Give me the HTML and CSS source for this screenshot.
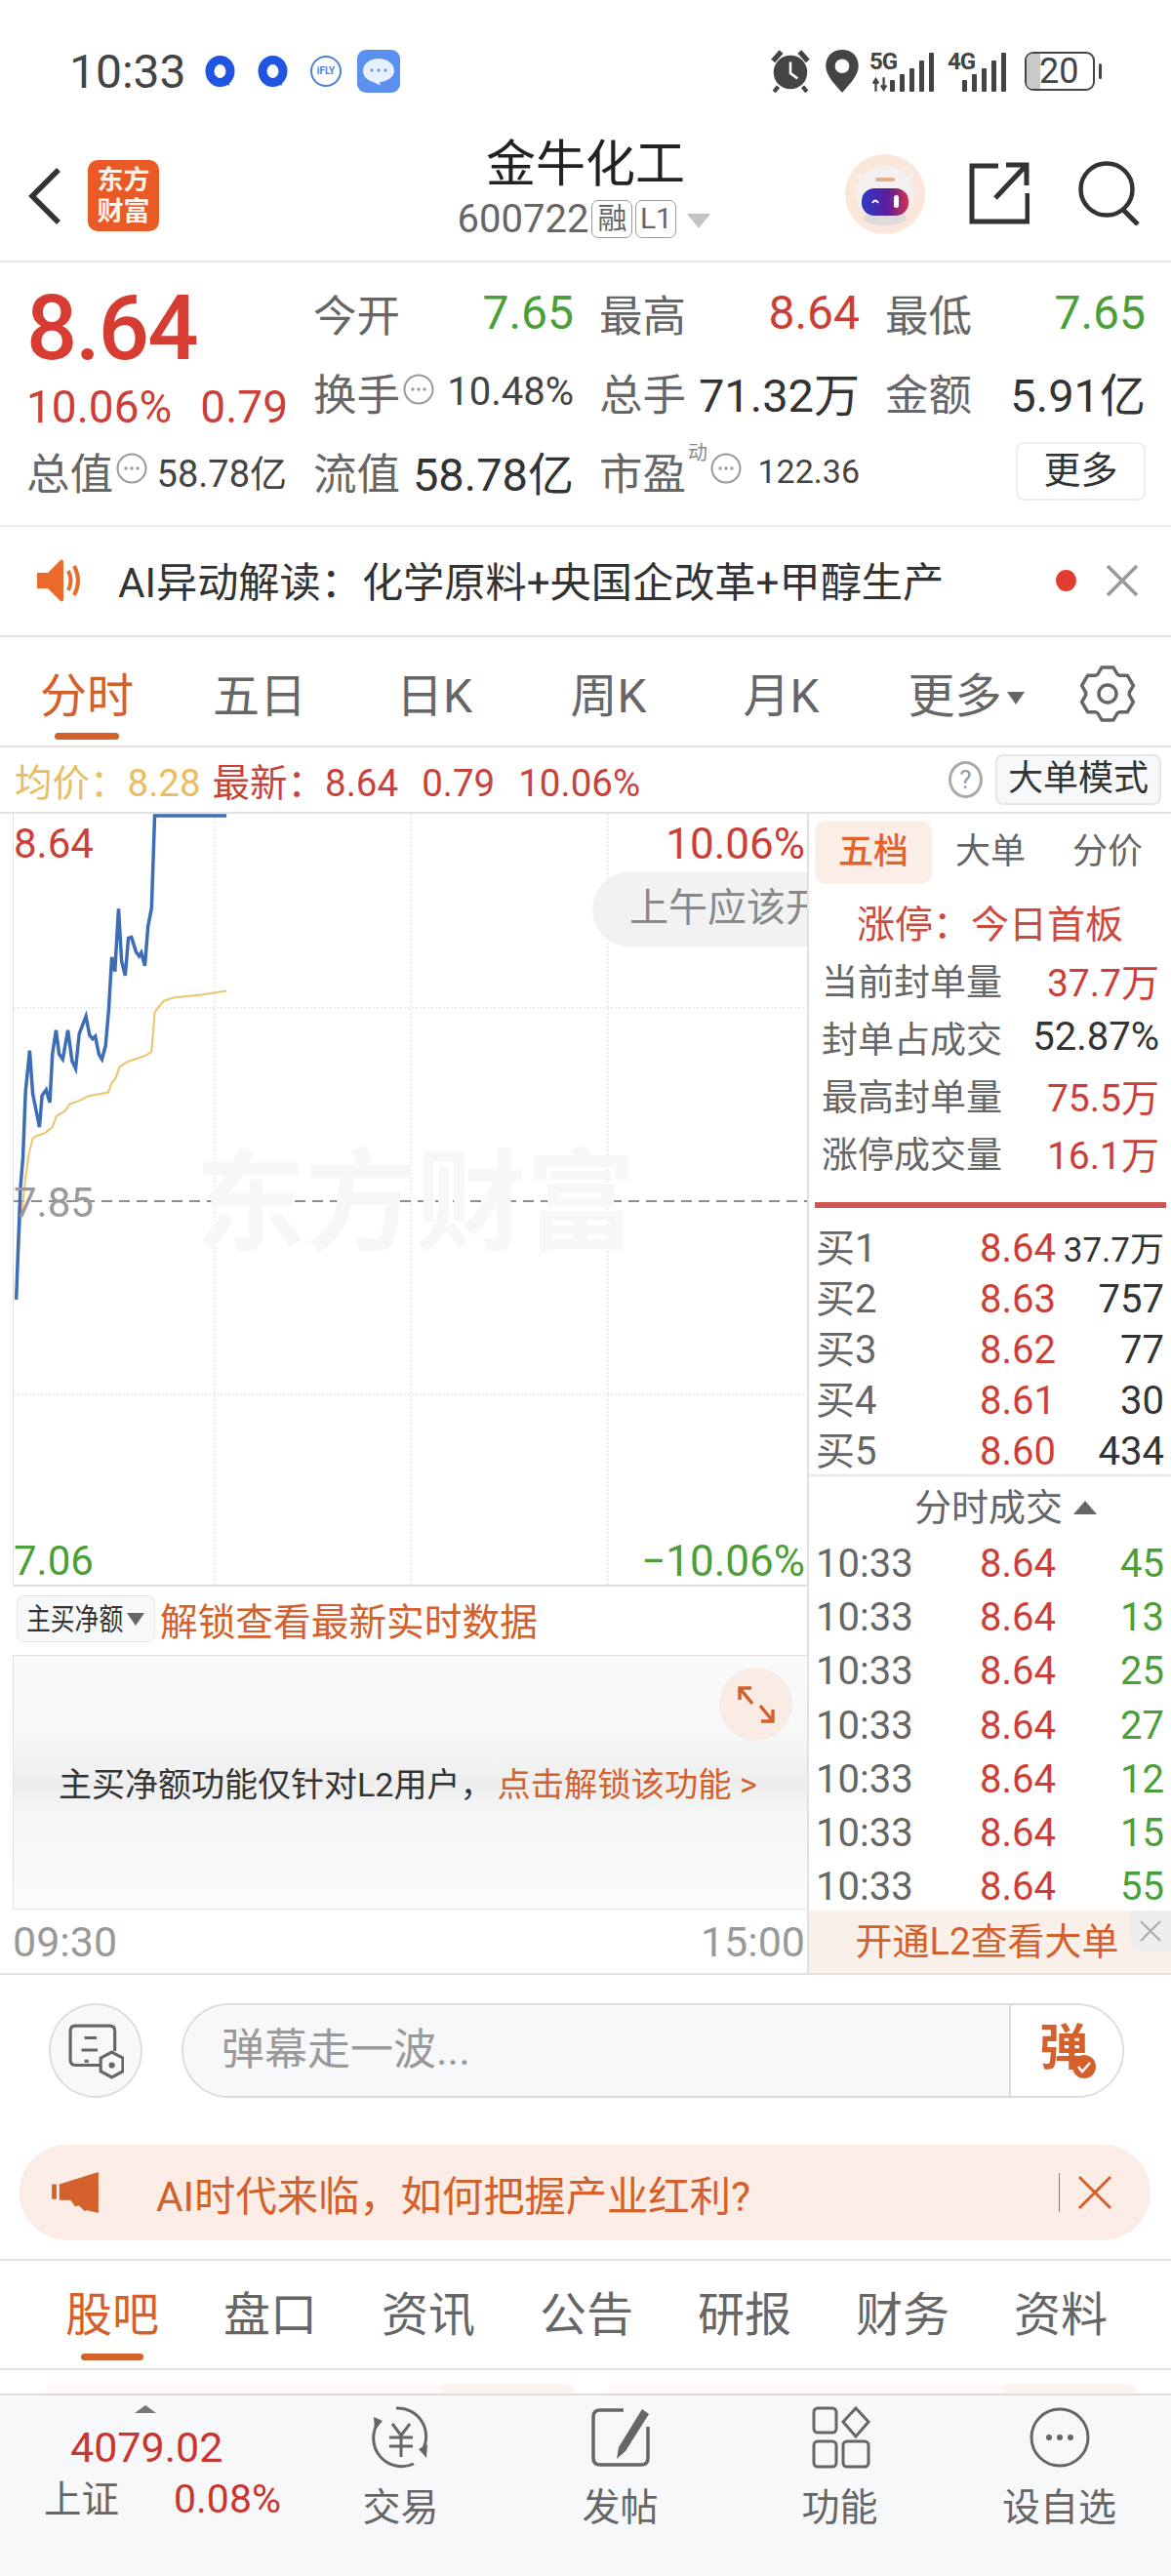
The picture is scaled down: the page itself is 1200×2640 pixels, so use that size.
FILE: index.html
```html
<!DOCTYPE html>
<html lang="zh-CN">
<head>
    <meta charset="UTF-8">
    <title>金牛化工</title>
    <link rel="stylesheet" href="styles.css">
</head>
<body>
<svg class="defs">
    <symbol id="dots" viewBox="0 0 32 32">
        <circle cx="16" cy="16" r="14.5" fill="none" stroke="#999" stroke-width="2"/>
        <circle cx="10" cy="16" r="1.7" fill="#999"/><circle cx="16" cy="16" r="1.7" fill="#999"/><circle cx="22" cy="16" r="1.7" fill="#999"/>
    </symbol>
</svg>

<!-- status bar -->
<div class="statusbar">
    <span class="clock">10:33</span>
    <svg class="ring" viewBox="0 0 30 32"><ellipse cx="15" cy="16" rx="10.500" ry="11.500" fill="none" stroke="#1f55e0" stroke-width="9"/><path d="M15 24l9 7 2-12z" fill="#1f55e0"/></svg>
    <svg class="ring ring-b" viewBox="0 0 30 32"><ellipse cx="15" cy="16" rx="10.500" ry="11.500" fill="none" stroke="#1f55e0" stroke-width="9"/><path d="M15 24l9 7 2-12z" fill="#1f55e0"/></svg>
    <span class="ifly">iFLY</span>
    <svg class="chat-app" viewBox="0 0 44 44"><rect width="44" height="44" rx="9" fill="#5b8ff0"/><path d="M22 9c-9 0-16 5.500-16 12.500 0 5 3.500 9 9 11l9 4-1-3.500c8-.5 15-5 15-11.500C38 14.500 31 9 22 9z" fill="#e6f0ff"/><circle cx="15" cy="21" r="1.500" fill="#5b8ff0"/><circle cx="22" cy="21" r="1.500" fill="#5b8ff0"/><circle cx="29" cy="21" r="1.500" fill="#5b8ff0"/></svg>
    <div class="status-right">
        <svg class="st-alarm" viewBox="0 0 40 42"><circle cx="20" cy="22" r="16.500" fill="#444"/><path d="M20 12v11l7 5" stroke="#fff" stroke-width="2.500" fill="none"/><path d="M3 11L11 2M37 11L29 2" stroke="#444" stroke-width="5"/><path d="M8 36l-4 5M32 36l4 5" stroke="#444" stroke-width="4"/></svg>
        <svg class="st-pin" viewBox="0 0 34 42"><path d="M17 0C7 0 1 7 1 16c0 10 11 20 16 26 5-6 16-16 16-26C33 7 27 0 17 0z" fill="#444"/><circle cx="17" cy="16" r="7" fill="#fff"/></svg>
        <div class="signal signal-5g">
            <span class="sig-label">5G</span>
            <svg class="sig-arrows" viewBox="0 0 20 16"><path d="M5 16V5M2 7l3-5 3 5M14 0v11M11 9l3 5 3-5" stroke="#444" stroke-width="2.500" fill="none"/></svg>
            <svg class="sig-bars" viewBox="0 0 46 40"><rect x="0" y="28" width="5" height="12" rx="1"/><rect x="10" y="22" width="5" height="18" rx="1"/><rect x="20" y="16" width="5" height="24" rx="1"/><rect x="30" y="8" width="5" height="32" rx="1"/><rect x="40" y="0" width="5" height="40" rx="1"/></svg>
        </div>
        <div class="signal signal-4g">
            <span class="sig-label">4G</span>
            <svg class="sig-bars" viewBox="0 0 46 40"><rect x="0" y="28" width="5" height="12" rx="1"/><rect x="10" y="22" width="5" height="18" rx="1"/><rect x="20" y="16" width="5" height="24" rx="1"/><rect x="30" y="8" width="5" height="32" rx="1"/><rect x="40" y="0" width="5" height="40" rx="1"/></svg>
        </div>
        <div class="battery"><span class="battery-level"></span><span class="battery-num">20</span></div>
        <span class="battery-nub"></span>
    </div>
</div>

<!-- header -->
<div class="header">
    <svg class="back" viewBox="0 0 34 60"><path d="M31 3L4 30l27 27" fill="none" stroke="#333" stroke-width="5.500"/></svg>
    <div class="logo"><span>东方</span><span>财富</span></div>
    <div class="title-box">
        <div class="title">金牛化工</div>
        <div class="code-row">
            <span class="code">600722</span><span class="tag">融</span><span class="tag">L1</span><span class="tri-down"></span>
        </div>
    </div>
    <svg class="robot" viewBox="0 0 82 82">
        <defs><linearGradient id="visor" x1="0" x2="1"><stop offset="0" stop-color="#2d3bc8"/><stop offset=".55" stop-color="#5a1f9c"/><stop offset="1" stop-color="#d2304e"/></linearGradient></defs>
        <circle cx="41" cy="41" r="41" fill="#fbe6da"/>
        <path d="M13 20l7 9M69 20l-7 9" stroke="#f2f0ee" stroke-width="5"/>
        <ellipse cx="41" cy="40" rx="30" ry="28" fill="#f3f1ef"/>
        <ellipse cx="41" cy="66" rx="22" ry="7" fill="#dedcda"/>
        <rect x="31" y="24" width="20" height="4" rx="2" fill="#e0b18c"/>
        <rect x="17" y="35" width="48" height="28" rx="13" fill="url(#visor)"/>
        <path d="M28 50q3-5 6 0" stroke="#fff" stroke-width="2" fill="none"/>
        <rect x="50" y="42" width="5" height="13" rx="2.500" fill="#fff"/>
    </svg>
    <svg class="share" viewBox="0 0 62 64"><path d="M30 4H3v57h57V32" fill="none" stroke="#333" stroke-width="5"/><path d="M27 37L58 4M38 3h21v21" fill="none" stroke="#333" stroke-width="5"/></svg>
    <svg class="search" viewBox="0 0 64 66"><circle cx="29" cy="29" r="26.500" fill="none" stroke="#333" stroke-width="4.500"/><path d="M46 50l15 15" stroke="#333" stroke-width="5"/></svg>
</div>

<!-- quote -->
<div class="quote">
    <div class="price-box">
        <div class="price">8.64</div>
        <div class="change"><span>10.06%</span><span>0.79</span></div>
    </div>
    <div class="cell"><span class="lbl">今开</span><span class="val green">7.65</span></div>
    <div class="cell"><span class="lbl">最高</span><span class="val red">8.64</span></div>
    <div class="cell"><span class="lbl">最低</span><span class="val green">7.65</span></div>
    <div class="cell"><span class="lbl">换手<svg class="dots"><use href="#dots"/></svg></span><span class="val small">10.48%</span></div>
    <div class="cell"><span class="lbl">总手</span><span class="val dark">71.32万</span></div>
    <div class="cell"><span class="lbl">金额</span><span class="val dark">5.91亿</span></div>
    <div class="cell first"><span class="lbl">总值<svg class="dots"><use href="#dots"/></svg></span><span class="val tiny">58.78亿</span></div>
    <div class="cell"><span class="lbl">流值</span><span class="val dark">58.78亿</span></div>
    <div class="cell"><span class="lbl">市盈<sup class="sup">动</sup><svg class="dots"><use href="#dots"/></svg></span><span class="val smaller">122.36</span></div>
    <div class="cell end"><span class="more-btn">更多</span></div>
</div>

<!-- notice -->
<div class="notice">
    <svg class="speaker" viewBox="0 0 48 46"><path d="M1 15h11L25 2c2-1 3 0 3 2v38c0 2-1 3-3 2L12 31H1z" fill="#ea6a2c"/><path d="M33 13q5 10 0 20M39 8q8 15 0 30" fill="none" stroke="#ea6a2c" stroke-width="4"/></svg>
    <span class="notice-text">AI异动解读：化学原料+央国企改革+甲醇生产</span>
    <span class="red-dot"></span>
    <svg class="notice-x" viewBox="0 0 34 34"><path d="M2 2l30 30M32 2L2 32" stroke="#999" stroke-width="3.500"/></svg>
</div>

<!-- period tabs -->
<div class="tabs">
    <span class="tab on">分时</span>
    <span class="tab">五日</span>
    <span class="tab">日K</span>
    <span class="tab">周K</span>
    <span class="tab">月K</span>
    <span class="tab">更多<i class="tri-small"></i></span>
    <svg class="gear" viewBox="-2 -2 58 60"><path d="M17 8l4-7h12l4 7 2.300 1.300 8.100 0 6 10.400-4.100 7v2.600l4.100 7-6 10.400h-8.100L37 48l-4 7H21l-4-7-2.300-1.300H6.600l-6-10.400 4.100-7v-2.600l-4.100-7 6-10.400h8.100z" fill="none" stroke="#666" stroke-width="3.500" stroke-linejoin="round"/><circle cx="27" cy="28" r="9" fill="none" stroke="#666" stroke-width="3.500"/></svg>
</div>

<!-- avg / last bar -->
<div class="infobar">
    <span class="avg">均价：8.28</span>
    <span class="last"><span>最新：8.64</span><span>0.79</span><span>10.06%</span></span>
    <span class="help">?</span>
    <span class="mode-btn">大单模式</span>
</div>

<div class="main">
    <div class="left">
        <div class="chart">
            <svg class="chart-svg" viewBox="0 0 813 792">
                <path class="grid-line" d="M206 0V792M407 0V792M609 0V792M0 199H813M0 595H813"/>
                <path class="mid-line" d="M0 397H813"/>
                <g transform="scale(.5294 .523) translate(-25 -26)">
                    <polyline class="avg-line" points="30,960 38,830 48,740 55,690 62,662 70,657 85,652 100,640 108,618 125,608 133,595 155,587 170,579 208,572 215,553 222,545 230,522 245,512 280,500 292,492 298,415 315,393 335,386 385,381 437,373"/>
                    <polyline class="price-line" points="30,978 38,760 43,700 48,570 56,490 62,575 75,640 80,578 88,567 95,592 100,497 107,450 113,497 120,507 130,450 138,510 145,525 152,457 165,423 172,460 178,467 183,462 190,497 196,507 203,480 209,410 215,307 221,335 228,212 234,315 241,343 247,270 253,268 262,297 268,305 272,298 279,324 285,247 292,210 298,30 437,30"/>
                </g>
            </svg>
            <div class="watermark">东方财富</div>
            <div class="toast">上午应该开</div>
            <div class="chart-labels">
                <div class="label-row"><span class="red">8.64</span><span class="red wide">10.06%</span></div>
                <div class="label-row"><span class="gray">7.85</span></div>
                <div class="label-row"><span class="green">7.06</span><span class="green wide">−10.06%</span></div>
            </div>
        </div>
        <div class="strip">
            <span class="select"><span class="select-text">主买净额</span><i class="tri-small"></i></span>
            <span class="unlock">解锁查看最新实时数据</span>
        </div>
        <div class="locked">
            <span class="locked-text">主买净额功能仅针对L2用户，<em>点击解锁该功能 &gt;</em></span>
            <span class="expand"><svg viewBox="0 0 38 38"><path d="M2 14V2h12M2 2l13 16M36 24v12H24M36 36L23 20" fill="none" stroke="#d4602b" stroke-width="3.500"/></svg></span>
        </div>
        <div class="axis"><span>09:30</span><span>15:00</span></div>
    </div>

    <div class="right">
        <div class="side-tabs">
            <span class="side-tab on">五档</span><span class="side-tab">大单</span><span class="side-tab">分价</span>
        </div>
        <div class="limit-title">涨停：今日首板</div>
        <div class="limit-row"><span>当前封单量</span><b class="red">37.7万</b></div>
        <div class="limit-row"><span>封单占成交</span><b class="wider">52.87%</b></div>
        <div class="limit-row"><span>最高封单量</span><b class="red">75.5万</b></div>
        <div class="limit-row"><span>涨停成交量</span><b class="red">16.1万</b></div>
        <div class="limit-bar"></div>
        <div class="book">
            <div class="book-row"><span>买1</span><b class="red">8.64</b><i class="tight">37.7万</i></div>
            <div class="book-row"><span>买2</span><b class="red">8.63</b><i>757</i></div>
            <div class="book-row"><span>买3</span><b class="red">8.62</b><i>77</i></div>
            <div class="book-row"><span>买4</span><b class="red">8.61</b><i>30</i></div>
            <div class="book-row"><span>买5</span><b class="red">8.60</b><i>434</i></div>
        </div>
        <div class="trades-head">分时成交<i class="tri-up"></i></div>
        <div class="trade-row"><span>10:33</span><b class="red">8.64</b><i class="green">45</i></div>
        <div class="trade-row"><span>10:33</span><b class="red">8.64</b><i class="green">13</i></div>
        <div class="trade-row"><span>10:33</span><b class="red">8.64</b><i class="green">25</i></div>
        <div class="trade-row"><span>10:33</span><b class="red">8.64</b><i class="green">27</i></div>
        <div class="trade-row"><span>10:33</span><b class="red">8.64</b><i class="green">12</i></div>
        <div class="trade-row"><span>10:33</span><b class="red">8.64</b><i class="green">15</i></div>
        <div class="trade-row"><span>10:33</span><b class="red">8.64</b><i class="green">55</i></div>
        <div class="l2-banner">
            开通L2查看大单
            <span class="l2-close"><svg viewBox="0 0 24 24"><path d="M2 2l20 20M22 2L2 22" stroke="#aaa" stroke-width="2"/></svg></span>
        </div>
    </div>
</div>

<!-- danmu input -->
<div class="danmu">
    <span class="danmu-btn">
        <svg viewBox="0 0 56 56"><path d="M36 42H8q-5 0-5-5V8q0-5 5-5h34q5 0 5 5v20" fill="none" stroke="#666" stroke-width="3"/><path d="M17 15h12M14 27h16M17 38h4" stroke="#666" stroke-width="3"/><path d="M44 29l11 6v13l-11 6-11-6V35z" fill="#f7f8fa" stroke="#666" stroke-width="3"/><circle cx="44" cy="42" r="3" fill="#666"/></svg>
    </span>
    <div class="danmu-input">
        <span class="placeholder">弹幕走一波...</span>
        <span class="danmu-send">弹<svg viewBox="0 0 24 24"><circle cx="12" cy="12" r="12" fill="#d4602b"/><path d="M6 12l4 5 8-9" fill="none" stroke="#fff" stroke-width="2.500"/></svg></span>
    </div>
</div>

<!-- ad banner -->
<div class="promo">
    <svg class="horn" viewBox="0 0 50 44"><path d="M0 13h5v16H0zM8 13L50 0v44l-12-3-3 1-6-6-4 1-5-7H8z" fill="#d4602b"/></svg>
    <span class="promo-text">AI时代来临，如何把握产业红利?</span>
    <span class="promo-sep"></span>
    <svg class="promo-x" viewBox="0 0 36 36"><path d="M2 2l32 32M34 2L2 34" stroke="#d4602b" stroke-width="3"/></svg>
</div>

<!-- news tabs -->
<div class="news-tabs">
    <span class="news-tab on">股吧</span>
    <span class="news-tab">盘口</span>
    <span class="news-tab">资讯</span>
    <span class="news-tab">公告</span>
    <span class="news-tab">研报</span>
    <span class="news-tab">财务</span>
    <span class="news-tab">资料</span>
</div>
<div class="peek"><span class="peek-card"></span><span class="peek-card"></span></div>

<!-- bottom bar -->
<div class="bottom">
    <div class="index">
        <i class="tri-up small"></i>
        <div class="index-value">4079.02</div>
        <div class="index-row"><span>上证</span><em>0.08%</em></div>
    </div>
    <div class="bot-item">
        <svg viewBox="0 0 66 66"><path d="M28 3a29 29 0 0 1 27 43M46 60A29 29 0 0 1 10 17" fill="none" stroke="#666" stroke-width="3"/><path d="M5 12l1 14 8-10zM60 40l-1 14-8-9z" fill="#666"/><path d="M24 19l9 12 9-12M21 33h24M21 42h24M33 31v22" fill="none" stroke="#666" stroke-width="3"/></svg>
        <span>交易</span>
    </div>
    <div class="bot-item">
        <svg viewBox="0 0 66 66"><path d="M36 5H12q-7 0-7 7v42q0 7 7 7h42q7 0 7-7V22" fill="none" stroke="#666" stroke-width="3.500"/><path d="M55 4l7 5-24 38-9 8 2-12z" fill="#666"/></svg>
        <span>发帖</span>
    </div>
    <div class="bot-item">
        <svg viewBox="0 0 66 66"><rect x="6" y="3" width="23" height="25" rx="4" fill="none" stroke="#666" stroke-width="3"/><path d="M49 3l13 14-13 15-13-15z" fill="none" stroke="#666" stroke-width="3"/><rect x="6" y="37" width="23" height="26" rx="4" fill="none" stroke="#666" stroke-width="3"/><rect x="36" y="37" width="26" height="26" rx="4" fill="none" stroke="#666" stroke-width="3"/></svg>
        <span>功能</span>
    </div>
    <div class="bot-item">
        <svg viewBox="0 0 66 66"><circle cx="33" cy="33" r="29" fill="none" stroke="#666" stroke-width="3"/><circle cx="22" cy="33" r="3" fill="#666"/><circle cx="33" cy="33" r="3" fill="#666"/><circle cx="44" cy="33" r="3" fill="#666"/></svg>
        <span>设自选</span>
    </div>
</div>
</body>
</html>
```

FILE: styles.css
```css
* {
    margin: 0;
    padding: 0;
    box-sizing: border-box;
}

body {
    width: 1200px;
    height: 2640px;
    overflow: hidden;
    background: #fff;
    color: #333;
    font-family: Roboto, "Noto Sans CJK SC", sans-serif;
}

i, em, b {
    font-style: normal;
    font-weight: 400;
}

.defs {
    display: none;
}

.red { color: #cc3f38; }
.green { color: #4c9f38; }
.gray { color: #999; }

/* status bar */
.statusbar {
    height: 130px;
    display: flex;
    align-items: center;
    padding: 16px 0 0 71px;
}

.clock {
    font-size: 48px;
    color: #444;
    width: 139px;
}

.ring {
    width: 31px;
    height: 32px;
}

.ring-b {
    margin-left: 23px;
}

.ifly {
    width: 32px;
    height: 32px;
    margin-left: 23px;
    border: 2px solid #4a7fe0;
    border-radius: 50%;
    font-size: 10px;
    line-height: 28px;
    text-align: center;
    color: #4a7fe0;
    font-weight: 700;
}

.chat-app {
    width: 44px;
    height: 44px;
    margin-left: 16px;
}

.status-right {
    margin-left: auto;
    padding-right: 71px;
    display: flex;
    align-items: center;
}

.st-alarm {
    width: 42px;
    height: 44px;
}

.st-pin {
    width: 36px;
    height: 44px;
    margin-left: 14px;
}

.signal {
    position: relative;
    height: 42px;
    margin-left: 10px;
}

.signal-5g { width: 67px; }
.signal-4g { width: 61px; margin-left: 13px; }

.sig-label {
    position: absolute;
    left: 0;
    top: -3px;
    font-size: 24px;
    font-weight: 700;
    color: #444;
    letter-spacing: -1px;
}

.sig-arrows {
    position: absolute;
    left: 2px;
    bottom: 0;
    width: 18px;
    height: 15px;
}

.sig-bars {
    position: absolute;
    right: 0;
    bottom: 0;
    width: 46px;
    height: 40px;
    fill: #444;
}

.battery {
    position: relative;
    width: 72px;
    height: 40px;
    margin-left: 18px;
    border: 2.5px solid #444;
    border-radius: 9px;
}

.battery-level {
    position: absolute;
    left: 0;
    top: 0;
    bottom: 0;
    width: 14px;
    border-radius: 6px 0 0 6px;
    background: #c9c9c9;
}

.battery-num {
    position: absolute;
    left: 13px;
    top: -2px;
    font-size: 36px;
    line-height: 40px;
    color: #444;
}

.battery-nub {
    width: 3px;
    height: 16px;
    margin-left: 4px;
    background: #444;
    border-radius: 2px;
}

/* header */
.header {
    position: relative;
    height: 139px;
    display: flex;
    align-items: center;
    border-bottom: 2px solid #e4e4e4;
    padding-left: 29px;
}

.back {
    width: 34px;
    height: 60px;
    margin-top: 4px;
}

.logo {
    width: 73px;
    height: 73px;
    margin: 4px 0 0 27px;
    background: #ea5a26;
    border-radius: 10px;
    color: #fff3e8;
    font-size: 27px;
    font-weight: 700;
    line-height: 32px;
    display: flex;
    flex-direction: column;
    align-items: center;
    justify-content: center;
}

.title-box {
    position: absolute;
    left: 0;
    right: 0;
    top: 8px;
    display: flex;
    flex-direction: column;
    align-items: center;
}

.title {
    font-size: 51px;
    line-height: 62px;
    color: #222;
}

.code-row {
    display: flex;
    align-items: center;
    height: 44px;
    margin-top: 2px;
    margin-left: -3px;
}

.code {
    font-size: 40px;
    color: #666;
}

.tag {
    flex: none;
    width: 42px;
    height: 39px;
    margin-left: 3px;
    border: 1.5px solid #999;
    border-radius: 7px;
    font-size: 30px;
    line-height: 35px;
    text-align: center;
    color: #666;
}

.tri-down {
    width: 0;
    height: 0;
    margin: 4px 0 0 11px;
    border-left: 12px solid transparent;
    border-right: 12px solid transparent;
    border-top: 15px solid #c4c4c4;
}

.robot {
    width: 82px;
    height: 82px;
    margin-left: auto;
}

.share {
    width: 62px;
    height: 64px;
    margin: -2px 0 0 45px;
}

.search {
    width: 64px;
    height: 66px;
    margin: -2px 31px 0 50px;
}

/* quote */
.quote {
    height: 271px;
    padding: 11px 0 0 27px;
    display: grid;
    grid-template-columns: 294px 293px 293px 264px;
    grid-auto-rows: 81px;
    border-bottom: 2px solid #eee;
}

.price-box {
    grid-row: span 2;
    width: 270px;
}

.price {
    margin-top: 13px;
    font-size: 92px;
    line-height: 88px;
    color: #d73c32;
    font-weight: 500;
    letter-spacing: -2px;
}

.change {
    display: flex;
    justify-content: space-between;
    margin-top: 10px;
    width: 268px;
    font-size: 46px;
    line-height: 52px;
    color: #cc3f38;
}

.cell {
    width: 267px;
    display: flex;
    align-items: center;
    justify-content: space-between;
    white-space: nowrap;
}

.cell.end {
    justify-content: flex-end;
}

.lbl {
    display: flex;
    align-items: center;
    position: relative;
    font-size: 44.5px;
    color: #666;
}

.dots {
    width: 32px;
    height: 32px;
    margin-left: 3px;
    margin-top: -6px;
}

.sup {
    font-size: 20px;
    line-height: 20px;
    margin: -38px 0 0 2px;
    color: #888;
}

.val {
    font-size: 48px;
}

.val.dark { font-size: 47px; color: #333; }
.val.small { font-size: 40px; color: #444; }
.val.tiny { font-size: 38px; color: #444; }
.val.smaller { font-size: 34px; color: #444; }

.more-btn {
    width: 133px;
    height: 60px;
    border: 2px solid #eee;
    border-radius: 8px;
    text-align: center;
    font-size: 38px;
    line-height: 54px;
    color: #333;
}

/* notice */
.notice {
    height: 113px;
    display: flex;
    align-items: center;
    padding: 0 0 2px 37px;
    border-bottom: 2px solid #e2e2e2;
}

.speaker {
    width: 48px;
    height: 46px;
}

.notice-text {
    margin: -3px 0 0 36px;
    font-size: 42.2px;
    color: #333;
}

.red-dot {
    width: 21px;
    height: 22px;
    margin-left: auto;
    border-radius: 50%;
    background: #e23b2f;
}

.notice-x {
    width: 34px;
    height: 34px;
    margin: 0 33px 0 30px;
}

/* tabs */
.tabs {
    position: relative;
    height: 113px;
    display: grid;
    grid-template-columns: 178px 176px 182px 175px 179px 200px;
    align-items: center;
    justify-items: center;
    border-bottom: 2px solid #e2e2e2;
}

.tab {
    font-size: 48px;
    color: #666;
    white-space: nowrap;
}

.tab.on {
    color: #d4602b;
    position: relative;
}

.tab.on::after {
    content: "";
    position: absolute;
    left: 15px;
    right: 15px;
    bottom: -14px;
    height: 7px;
    border-radius: 4px;
    background: #d4602b;
}

.tri-small {
    display: inline-block;
    width: 0;
    height: 0;
    margin-left: 5px;
    vertical-align: 8px;
    border-left: 9px solid transparent;
    border-right: 9px solid transparent;
    border-top: 13px solid #666;
}

.gear {
    position: absolute;
    left: 1106px;
    top: 28px;
    width: 58px;
    height: 60px;
}

/* avg bar */
.infobar {
    height: 68px;
    display: flex;
    align-items: center;
    padding-left: 15px;
    border-bottom: 2px solid #e2e2e2;
    font-size: 38.5px;
    white-space: nowrap;
}

.avg {
    color: #e9bd62;
}

.last {
    display: flex;
    align-items: baseline;
    gap: 24px;
    margin-left: 12px;
    color: #c8423c;
}

.help {
    width: 35px;
    height: 38px;
    margin-left: auto;
    border: 3px solid #aaa;
    border-radius: 50%;
    text-align: center;
    font-size: 26px;
    line-height: 32px;
    color: #999;
}

.mode-btn {
    width: 170px;
    height: 52px;
    margin: 0 10px 0 13px;
    border: 2px solid #e6e6e6;
    border-radius: 8px;
    background: #f7f8fa;
    text-align: center;
    font-size: 36px;
    line-height: 47px;
    color: #333;
}

/* main split */
.main {
    display: flex;
    height: 1190px;
    border-bottom: 2px solid #e2e2e2;
    overflow: hidden;
}

.left {
    width: 827px;
    flex: none;
    padding-left: 13px;
}

.chart {
    position: relative;
    height: 792px;
    border-left: 1px solid #ddd;
    border-bottom: 2px solid #ddd;
    overflow: hidden;
}

.chart-svg {
    position: absolute;
    left: 0;
    top: 0;
    width: 813px;
    height: 792px;
}

.grid-line {
    fill: none;
    stroke: #ddd;
    stroke-width: 1;
    stroke-dasharray: 2 2;
}

.mid-line {
    fill: none;
    stroke: #8d8d8d;
    stroke-width: 2;
    stroke-dasharray: 11 7;
}

.price-line, .avg-line {
    fill: none;
    vector-effect: non-scaling-stroke;
}

.price-line {
    stroke: #3d6db5;
    stroke-width: 3.5;
}

.avg-line {
    stroke: #edc36c;
    stroke-width: 2;
}

.watermark {
    position: absolute;
    left: 186px;
    top: 340px;
    font-size: 113px;
    line-height: 120px;
    font-weight: 700;
    color: #f7f7f7;
    white-space: nowrap;
}

.toast {
    position: absolute;
    left: 593px;
    top: 59px;
    width: 300px;
    height: 78px;
    padding-left: 38px;
    border-radius: 39px;
    background: #f2f2f2;
    font-size: 40px;
    line-height: 76px;
    color: #888;
    white-space: nowrap;
}

.chart-labels {
    position: absolute;
    left: 0;
    top: 0;
    width: 811px;
    height: 100%;
    padding: 7px 0 0;
    display: flex;
    flex-direction: column;
    justify-content: space-between;
    font-size: 42px;
    line-height: 48px;
}

.label-row {
    display: flex;
    justify-content: space-between;
}

.wide {
    font-size: 44px;
}

.strip {
    height: 70px;
    display: flex;
    align-items: center;
    padding: 0 0 4px 4px;
}

.select {
    width: 142px;
    height: 48px;
    padding-left: 9px;
    border: 1px solid #e6e6e6;
    border-radius: 8px;
    background: #f7f8fa;
    font-size: 31px;
    line-height: 45px;
    color: #333;
    display: flex;
    align-items: center;
    white-space: nowrap;
}

.select-text {
    flex: none;
    width: 100px;
    transform: scaleX(.8);
    transform-origin: left center;
}

.select .tri-small {
    margin-left: 3px;
    vertical-align: 0;
}

.unlock {
    margin-left: 5px;
    font-size: 38.7px;
    color: #d4602b;
    white-space: nowrap;
}

.locked {
    position: relative;
    height: 261px;
    display: flex;
    align-items: center;
    padding: 0 0 2px 46px;
    border: 1px solid #e2e2e2;
    border-right: 0;
    background: linear-gradient(180deg, #f9fafa 0%, #f7f8f8 30%, #eeeeef 50%, #f6f7f7 65%, #fafbfb 100%);
}

.locked-text {
    font-size: 34px;
    color: #333;
    white-space: nowrap;
}

.locked-text em {
    margin-left: 4px;
    font-size: 34.3px;
    color: #d4602b;
}

.expand {
    position: absolute;
    left: 723px;
    top: 12px;
    width: 75px;
    height: 75px;
    border-radius: 50%;
    background: #f8ece5;
    display: flex;
    align-items: center;
    justify-content: center;
}

.expand svg {
    width: 38px;
    height: 38px;
}

.axis {
    display: flex;
    justify-content: space-between;
    padding: 7px 2px 0 0;
    font-size: 43px;
    line-height: 52px;
    color: #999;
}

.right {
    flex: 1;
    display: flex;
    flex-direction: column;
    border-left: 2px solid #e2e2e2;
    font-size: 40px;
}

.right > * {
    flex: none;
}

.side-tabs {
    display: grid;
    grid-template-columns: 120px 120px 120px;
    margin: 7px 0 0 6px;
    height: 65px;
}

.side-tab {
    text-align: center;
    font-size: 36px;
    line-height: 64px;
    color: #666;
}

.side-tab.on {
    background: #fbeee7;
    border-radius: 12px;
    color: #e3622d;
    font-weight: 500;
}

.limit-title {
    height: 62px;
    margin-top: 6px;
    text-align: center;
    font-size: 39px;
    line-height: 72px;
    color: #cc4a40;
}

.limit-row {
    height: 59px;
    display: flex;
    align-items: center;
    justify-content: space-between;
    padding: 0 12px 0 13px;
    font-size: 37px;
    color: #666;
}

.limit-row b {
    font-size: 39px;
}

.limit-row b.wider {
    font-size: 40px;
    color: #333;
}

.limit-bar {
    height: 6px;
    margin: 22px 5px 0 6px;
    background: #d05650;
}

.book {
    margin-top: 9px;
    padding-bottom: 4px;
    border-bottom: 2px solid #e8e8e8;
}

.book-row, .trade-row {
    display: grid;
    grid-template-columns: 168px 78px 1fr;
    padding: 0 7px;
    color: #666;
}

.book-row {
    height: 52px;
    align-items: baseline;
}

.trade-row {
    height: 55.2px;
    align-items: center;
}

.book-row i, .trade-row i {
    text-align: right;
    white-space: nowrap;
}

.book-row i {
    color: #333;
}

.book-row i.tight {
    font-size: 35px;
}

.trades-head {
    height: 62px;
    padding-left: 32px;
    text-align: center;
    font-size: 38px;
    line-height: 64px;
    color: #666;
}

.tri-up {
    display: inline-block;
    width: 0;
    height: 0;
    margin-left: 11px;
    vertical-align: 6px;
    border-left: 12px solid transparent;
    border-right: 12px solid transparent;
    border-bottom: 14px solid #666;
}

.l2-banner {
    position: relative;
    height: 64px;
    margin-top: -3px;
    padding-right: 6px;
    background: #f9f0ea;
    text-align: center;
    font-size: 38px;
    line-height: 64px;
    color: #d4602b;
}

.l2-close {
    position: absolute;
    right: 0;
    top: 0;
    width: 42px;
    height: 42px;
    border-bottom-left-radius: 14px;
    background: #eee;
    display: flex;
    align-items: center;
    justify-content: center;
}

.l2-close svg {
    width: 24px;
    height: 24px;
}

/* danmu */
.danmu {
    display: flex;
    gap: 40px;
    padding: 29px 48px 0 50px;
    height: 126px;
}

.danmu-btn {
    width: 96px;
    height: 97px;
    flex: none;
    border: 2px solid #ddd;
    border-radius: 50%;
    background: #f7f8fa;
    display: flex;
    align-items: center;
    justify-content: center;
}

.danmu-btn svg {
    width: 58px;
    height: 58px;
}

.danmu-input {
    flex: 1;
    height: 97px;
    display: flex;
    border: 2px solid #ddd;
    border-radius: 49px;
    background: #f7f8fa;
    overflow: hidden;
}

.placeholder {
    flex: 1;
    padding-left: 39px;
    font-size: 44px;
    line-height: 92px;
    color: #999;
}

.danmu-send {
    position: relative;
    width: 116px;
    border-left: 2px solid #ddd;
    background: #fff;
    padding-left: 29px;
    font-size: 50px;
    line-height: 88px;
    font-weight: 700;
    color: #d4602b;
}

.danmu-send svg {
    position: absolute;
    left: 63px;
    top: 51px;
    width: 24px;
    height: 24px;
}

/* promo */
.promo {
    height: 98px;
    margin: 48px 21px 0 20px;
    display: flex;
    align-items: center;
    padding-left: 32px;
    border-radius: 49px;
    background: #fbece5;
}

.horn {
    width: 50px;
    height: 42px;
}

.promo-text {
    margin-left: 58px;
    font-size: 42.3px;
    color: #d4602b;
}

.promo-sep {
    width: 1px;
    height: 40px;
    margin-left: auto;
    background: #d4602b;
}

.promo-x {
    width: 36px;
    height: 36px;
    margin: 0 39px 0 18px;
}

/* news tabs */
.news-tabs {
    display: grid;
    grid-template-columns: repeat(7, 162px);
    margin-top: 19px;
    padding-left: 34px;
    height: 114px;
    border-top: 2px solid #e2e2e2;
    border-bottom: 2px solid #e2e2e2;
}

.news-tab {
    position: relative;
    text-align: center;
    font-size: 48px;
    line-height: 112px;
    color: #666;
}

.news-tab.on {
    color: #d4602b;
}

.news-tab.on::after {
    content: "";
    position: absolute;
    left: 49px;
    right: 49px;
    top: 95px;
    height: 7px;
    border-radius: 4px;
    background: #d4602b;
}

.peek {
    display: flex;
    gap: 33px;
    height: 24px;
    padding: 14px 35px 0 45px;
}

.peek-card {
    flex: 1;
    border-radius: 18px 18px 0 0;
    background: linear-gradient(90deg, #fef9f6 75%, #fdf3ee 75%);
}

/* bottom */
.bottom {
    position: relative;
    height: 187px;
    display: grid;
    grid-template-columns: 298px 225px 225px 225px 225px;
    border-top: 2px solid #ddd;
    background: #f7f8fa;
}

.index {
    position: relative;
    padding-left: 45px;
    color: #666;
}

.index .tri-up.small {
    position: absolute;
    left: 138px;
    top: 10px;
    margin: 0;
    border-left-width: 11px;
    border-right-width: 11px;
    border-bottom-width: 8px;
    border-bottom-color: #777;
}

.index-value {
    margin: 28px 0 0 27px;
    font-size: 43px;
    line-height: 50px;
    color: #c8362f;
}

.index-row {
    display: flex;
    align-items: baseline;
    margin-top: 3px;
    font-size: 38.5px;
    line-height: 50px;
    white-space: nowrap;
}

.index-row em {
    margin-left: 56px;
    font-size: 41px;
    color: #c8362f;
}

.bot-item {
    display: flex;
    flex-direction: column;
    align-items: center;
    padding-top: 10px;
    font-size: 39px;
    line-height: 50px;
    color: #666;
}

.bot-item svg {
    width: 66px;
    height: 66px;
    margin-bottom: 14px;
}
```
